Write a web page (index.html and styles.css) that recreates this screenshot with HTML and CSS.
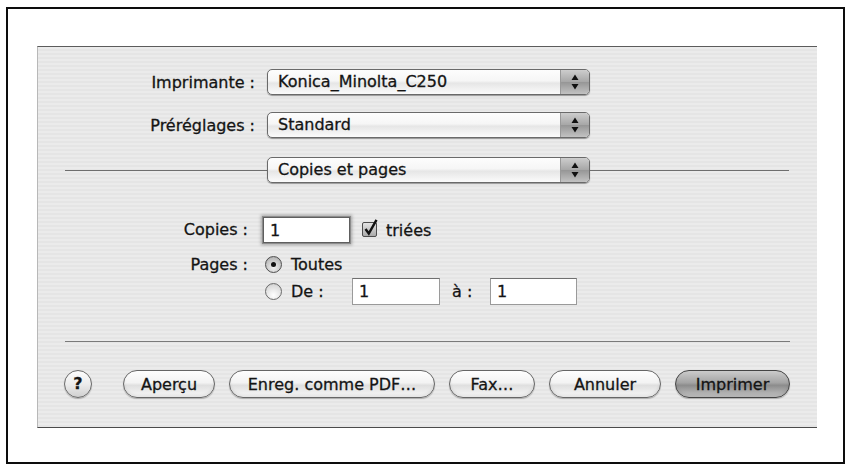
FILE: index.html
```html
<!DOCTYPE html>
<html lang="fr">
<head>
    <meta charset="UTF-8">
    <title>Imprimer</title>
    <link rel="stylesheet" href="styles.css">
</head>
<body>
    <div class="sheet">
        <div class="dialog">
            <div class="field-row">
                <span class="label">Imprimante :</span>
                <div class="popup">
                    <span class="popup-text">Konica_Minolta_C250</span>
                    <span class="stepper">
                        <svg width="28" height="24" viewBox="0 0 28 24"><path d="M10.5 10 L17.5 10 L14 4.5 Z M10.5 14 L17.5 14 L14 19.5 Z" fill="#111"/></svg>
                    </span>
                </div>
            </div>
            <div class="field-row">
                <span class="label">Préréglages :</span>
                <div class="popup">
                    <span class="popup-text">Standard</span>
                    <span class="stepper">
                        <svg width="28" height="24" viewBox="0 0 28 24"><path d="M10.5 10 L17.5 10 L14 4.5 Z M10.5 14 L17.5 14 L14 19.5 Z" fill="#111"/></svg>
                    </span>
                </div>
            </div>

            <div class="section-bar">
                <span class="rule rule-left"></span>
                <div class="popup">
                    <span class="popup-text">Copies et pages</span>
                    <span class="stepper">
                        <svg width="28" height="24" viewBox="0 0 28 24"><path d="M10.5 10 L17.5 10 L14 4.5 Z M10.5 14 L17.5 14 L14 19.5 Z" fill="#111"/></svg>
                    </span>
                </div>
                <span class="rule rule-right"></span>
            </div>

            <div class="copies">
                <span class="label">Copies :</span>
                <div class="copies-line">
                    <input type="text" class="textfield textfield-copies focused" value="1">
                    <span class="checkbox">
                        <svg width="16" height="18" viewBox="0 0 16 18">
                            <defs>
                                <linearGradient id="cb" x1="0" y1="0" x2="0" y2="1">
                                    <stop offset="0" stop-color="#e6e6e6"/>
                                    <stop offset="1" stop-color="#a8a8a8"/>
                                </linearGradient>
                            </defs>
                            <rect x="0.5" y="3.5" width="14" height="14" rx="1.5" fill="url(#cb)" stroke="#4d4d4d"/>
                            <path d="M3.5 10 L6.8 14.5 L14.5 0.8" fill="none" stroke="#111" stroke-width="2.4"/>
                        </svg>
                    </span>
                    <span>triées</span>
                </div>

                <span class="label label-pages">Pages :</span>
                <div class="pages">
                    <div class="option">
                        <span class="radio selected"></span>
                        <span>Toutes</span>
                    </div>
                    <div class="option option-range">
                        <span class="radio"></span>
                        <span class="range-label">De :</span>
                        <input type="text" class="textfield textfield-from" value="1">
                        <span class="range-to">à :</span>
                        <input type="text" class="textfield textfield-to" value="1">
                    </div>
                </div>
            </div>

            <div class="separator"></div>

            <div class="actions">
                <span class="help">?</span>
                <button class="btn btn-preview">Aperçu</button>
                <button class="btn btn-pdf">Enreg. comme PDF…</button>
                <button class="btn btn-fax">Fax…</button>
                <button class="btn btn-cancel">Annuler</button>
                <button class="btn btn-print btn-default">Imprimer</button>
            </div>
        </div>
    </div>
</body>
</html>
```

FILE: styles.css
```css
body {
    margin: 0;
    background-color: #fff;
    font-family: "DejaVu Sans", "Liberation Sans", sans-serif;
    font-size: 16px;
    color: #141414;
    -webkit-text-stroke: 0.3px #141414;
}

.sheet {
    width: 839px;
    height: 457px;
    margin: 7px 0 0 6px;
    border: 2px solid #0d0d0d;
    box-sizing: border-box;
    overflow: hidden;
}

/* Print dialog */
.dialog {
    width: 780px;
    height: 382px;
    margin: 37px 0 0 29px;
    box-sizing: border-box;
    border-top: 1px solid #5c5c5c;
    border-bottom: 1px solid #4a4a4a;
    border-left: 1px solid #b8b8b8;
    background: repeating-linear-gradient(180deg, #ebebeb 0, #ebebeb 2px, #e5e5e5 2px, #e5e5e5 4px);
}

.label {
    text-align: right;
    white-space: nowrap;
}

.field-row {
    display: grid;
    grid-template-columns: 217px 323px;
    column-gap: 12px;
    align-items: center;
    height: 26px;
    margin-top: 17px;
}

.field-row:first-child {
    margin-top: 22px;
}

.popup {
    display: flex;
    width: 323px;
    height: 26px;
    box-sizing: border-box;
    border: 1px solid #6a6a6a;
    border-radius: 5px;
    background: linear-gradient(#fdfdfd, #f6f6f6 45%, #e6e6e6 55%, #fbfbfb);
    box-shadow: 0 1px 1px rgba(0, 0, 0, 0.35);
    overflow: hidden;
}

.popup-text {
    flex: 1;
    padding-left: 10px;
    line-height: 24px;
    white-space: nowrap;
}

.stepper {
    width: 28px;
    border-left: 1px solid #999;
    background: linear-gradient(#cdcdcd, #a8a8a8 48%, #979797 52%, #c2c2c2);
}

.stepper svg {
    display: block;
}

.section-bar {
    display: flex;
    align-items: center;
    height: 26px;
    margin-top: 19px;
    padding-left: 27px;
}

.rule {
    height: 1px;
    background-color: #6e6e6e;
}

.rule-left {
    width: 202px;
}

.rule-right {
    width: 199px;
}

/* Copies et pages */
.copies {
    display: grid;
    grid-template-columns: 210px auto;
    column-gap: 15px;
    margin-top: 34px;
}

.copies .label {
    line-height: 26px;
}

.copies-line {
    display: flex;
    align-items: center;
    height: 26px;
}

.textfield {
    height: 26px;
    box-sizing: border-box;
    border: 1px solid #9a9a9a;
    border-top-color: #707070;
    padding: 0 0 0 6px;
    background-color: #fff;
    font: inherit;
    color: #141414;
    outline: none;
}

.textfield-copies {
    width: 87px;
}

.focused {
    border-color: #5e5e5e;
    box-shadow: 0 0 0 1px #8c8c8c, 0 0 3px 2px rgba(80, 80, 80, 0.45);
}

.checkbox {
    margin: -4px 8px 0 12px;
}

.checkbox svg {
    display: block;
}

.label-pages {
    margin-top: 9px;
    line-height: 25px;
}

.pages {
    margin-top: 9px;
}

.option {
    display: flex;
    align-items: center;
    height: 25px;
    padding-left: 2px;
}

.option-range {
    height: 27px;
    margin-top: 1px;
}

.option .textfield {
    height: 27px;
}

.radio {
    position: relative;
    width: 17px;
    height: 17px;
    box-sizing: border-box;
    margin-right: 9px;
    border: 1px solid #6a6a6a;
    border-radius: 50%;
    background: radial-gradient(circle at 50% 75%, #ffffff, #dcdcdc 70%, #bdbdbd);
}

.radio.selected {
    border-color: #4f4f4f;
    background: radial-gradient(circle at 50% 70%, #f2f2f2, #bdbdbd 70%, #9a9a9a);
}

.radio.selected::after {
    content: "";
    position: absolute;
    top: 5px;
    left: 5px;
    width: 5px;
    height: 5px;
    border-radius: 50%;
    background-color: #111;
}

.range-label {
    width: 61px;
}

.textfield-from {
    width: 88px;
}

.range-to {
    width: 50px;
    padding-left: 12px;
    box-sizing: border-box;
}

.textfield-to {
    width: 87px;
}

.separator {
    height: 1px;
    margin: 36px 27px 0 27px;
    background-color: #7a7a7a;
}

/* Buttons */
.actions {
    display: flex;
    align-items: center;
    gap: 14px;
    margin-top: 28px;
    padding-left: 26px;
}

.help {
    width: 28px;
    height: 28px;
    box-sizing: border-box;
    margin-right: 17px;
    border: 1px solid #6a6a6a;
    border-radius: 50%;
    background: linear-gradient(#fdfdfd, #ececec 50%, #d0d0d0);
    box-shadow: 0 1px 1px rgba(0, 0, 0, 0.25);
    text-align: center;
    line-height: 26px;
    font-weight: bold;
}

.btn {
    height: 28px;
    padding: 0;
    border: 1px solid #666;
    border-radius: 14px;
    background: linear-gradient(#fefefe, #f3f3f3 45%, #dfdfdf 55%, #f8f8f8);
    box-shadow: inset 0 -2px 3px rgba(0, 0, 0, 0.08), 0 1px 1px rgba(0, 0, 0, 0.25);
    font: inherit;
    color: #141414;
    white-space: nowrap;
}

.btn-preview {
    width: 92px;
}

.btn-pdf {
    width: 206px;
}

.btn-fax {
    width: 86px;
}

.btn-cancel {
    width: 112px;
}

.btn-print {
    width: 115px;
}

.btn-default {
    border-color: #444;
    background: linear-gradient(#cbcbcb, #a4a4a4 45%, #8c8c8c 55%, #c4c4c4);
}
```
